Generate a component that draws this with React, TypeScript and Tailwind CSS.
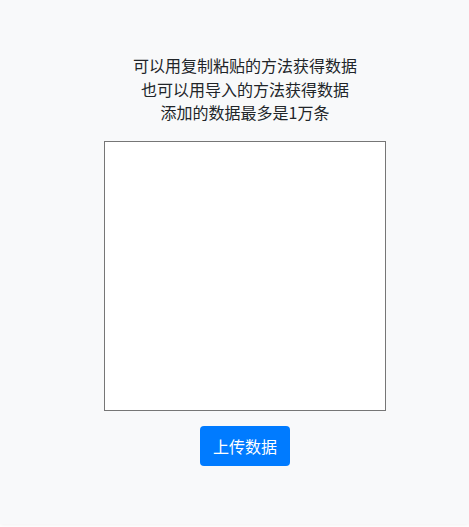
export default function App() {
  return (
    <div
      className="min-h-[527px] bg-white"
      style={{ fontFamily: '"Microsoft YaHei", "Noto Sans CJK SC", "Noto Sans", sans-serif' }}
    >
      <div className="h-[524px] bg-[#f8f9fa] pl-[21px] pt-[54px] shadow-[0_1px_4px_rgba(0,0,0,0.06)]">
        <div className="flex flex-col items-center">
          <p className="text-[16px] leading-[23.5px] text-[#212529]">可以用复制粘贴的方法获得数据</p>
          <p className="text-[16px] leading-[23.5px] text-[#212529]">也可以用导入的方法获得数据</p>
          <p className="text-[16px] leading-[23.5px] text-[#212529]">添加的数据最多是1万条</p>
          <textarea className="mt-[16px] h-[270px] w-[282px] resize-none border border-[#767676] bg-white" />
          <button className="mt-[15px] flex h-[40px] w-[90px] items-center justify-center rounded-[4px] bg-[#007bff] text-[16px] text-white">
            上传数据
          </button>
        </div>
      </div>
    </div>
  );
}
